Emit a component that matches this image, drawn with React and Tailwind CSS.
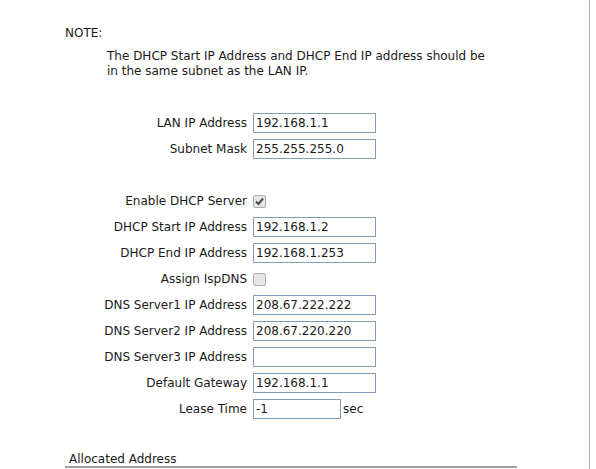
import React from "react";

const font = { fontFamily: 'Tahoma, "DejaVu Sans", sans-serif' };

function Field({ label, value, short, suffix }) {
  return (
    <div className="flex items-center h-[26px]">
      <div className="w-[253px] pr-[6px] text-right">{label}</div>
      <div
        className={`h-[20px] border border-[#7f9db9] bg-white flex items-center pl-[2px] ${short ? "w-[88px]" : "w-[123px]"}`}
      >
        {value}
      </div>
      {suffix && <span className="ml-[2px]">{suffix}</span>}
    </div>
  );
}

function Check({ label, checked }) {
  return (
    <div className="flex items-center h-[26px]">
      <div className="w-[253px] pr-[6px] text-right">{label}</div>
      <div className="w-[13px] h-[13px] border border-[#adadad] rounded-[2px] bg-[#e6e6e6] flex items-center justify-center">
        {checked && (
          <svg width="11" height="11" viewBox="0 0 11 11">
            <path d="M2 5.5 L4.5 8 L9 2.5" fill="none" stroke="#4d4d4d" strokeWidth="2" />
          </svg>
        )}
      </div>
    </div>
  );
}

export default function App() {
  return (
    <div className="w-[596px] h-[469px] bg-white overflow-hidden text-[12px] text-[#1a1a1a] leading-[15px]" style={font}>
      <div className="w-[590px] h-[469px] border-r border-[#b0b0b0]">
        <div className="pt-[26px] pl-[65px]">NOTE:</div>
        <div className="pt-[8px] pl-[107px]">
          The DHCP Start IP Address and DHCP End IP address should be
          <br />
          in the same subnet as the LAN IP.
        </div>
        <div className="pt-[31px]">
          <Field label="LAN IP Address" value="192.168.1.1" />
          <Field label="Subnet Mask" value="255.255.255.0" />
          <div className="h-[26px]" />
          <Check label="Enable DHCP Server" checked />
          <Field label="DHCP Start IP Address" value="192.168.1.2" />
          <Field label="DHCP End IP Address" value="192.168.1.253" />
          <Check label="Assign IspDNS" />
          <Field label="DNS Server1 IP Address" value="208.67.222.222" />
          <Field label="DNS Server2 IP Address" value="208.67.220.220" />
          <Field label="DNS Server3 IP Address" value="" />
          <Field label="Default Gateway" value="192.168.1.1" />
          <Field label="Lease Time" value="-1" short suffix="sec" />
        </div>
        <div className="mt-[30px] ml-[65px] w-[452px] border-b-2 border-[#a0a0a0] pl-[4px] leading-[14px]">
          Allocated Address
        </div>
      </div>
    </div>
  );
}
